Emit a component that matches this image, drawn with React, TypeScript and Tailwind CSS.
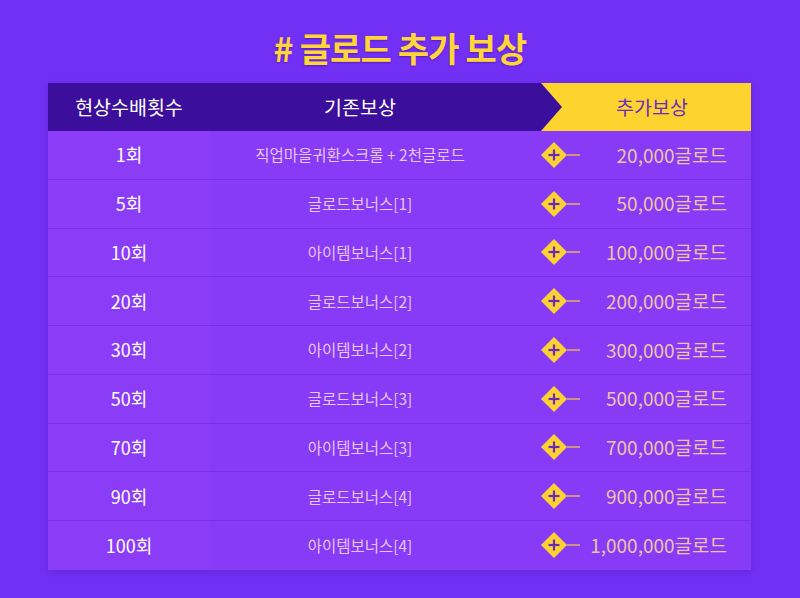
const rows: [string, string, string][] = [
  ["1회", "직업마을귀환스크롤 + 2천글로드", "20,000글로드"],
  ["5회", "글로드보너스[1]", "50,000글로드"],
  ["10회", "아이템보너스[1]", "100,000글로드"],
  ["20회", "글로드보너스[2]", "200,000글로드"],
  ["30회", "아이템보너스[2]", "300,000글로드"],
  ["50회", "글로드보너스[3]", "500,000글로드"],
  ["70회", "아이템보너스[3]", "700,000글로드"],
  ["90회", "글로드보너스[4]", "900,000글로드"],
  ["100회", "아이템보너스[4]", "1,000,000글로드"],
];

const PlusDiamond = () => (
  <svg width="40" height="28" viewBox="0 0 40 28" className="shrink-0">
    <polygon points="13,1 26,14 13,27 0,14" fill="#fcd232" />
    <line x1="26" y1="14" x2="39" y2="14" stroke="#fcd232" strokeWidth="1.2" />
    <line x1="7.5" y1="14" x2="18.5" y2="14" stroke="#6a2bb8" strokeWidth="2.2" />
    <line x1="13" y1="8.5" x2="13" y2="19.5" stroke="#6a2bb8" strokeWidth="2.2" />
  </svg>
);

export default function App() {
  return (
    <main
      className="w-[800px] h-[598px] bg-[#7230f4] flex flex-col items-center pt-[29px]"
      style={{ fontFamily: '"Noto Sans CJK KR", "Noto Sans", sans-serif' }}
    >
      <h1 className="text-[34px] leading-[37px] font-bold text-[#ffd53a] tracking-tight [text-shadow:0_1px_2px_rgba(60,10,140,0.5)]">
        # 글로드 추가 보상
      </h1>

      <div className="mt-[17px] w-[703px] ml-[-1px] shadow-[0_2px_8px_rgba(60,10,150,0.25)]">
        <div className="flex h-[48px] bg-[#3b0f9b] items-center">
          <div className="w-[162px] text-center text-white text-[19.5px]">현상수배횟수</div>
          <div className="w-[300px] text-center text-white text-[19.5px]">기존보상</div>
          <div className="ml-auto w-[210px] h-full bg-[#fdd42e] flex items-center justify-center pl-[12px] text-[19.5px] text-[#6b2bc2] [clip-path:polygon(0_0,100%_0,100%_100%,0_100%,21px_50%)]">
            추가보상
          </div>
        </div>

        {rows.map(([count, base, extra], i) => (
          <div
            key={count}
            className={`flex h-[48.75px] items-center ${i < rows.length - 1 ? "border-b border-[#7a2fe4]" : ""}`}
          >
            <div className="w-[162px] h-full flex items-center justify-center bg-[#8b3cf6] text-white text-[18px]">
              {count}
            </div>
            <div className="w-[300px] h-full flex items-center justify-center bg-[#873bf6] text-[#e6c4f4] text-[15.5px]">
              {base}
            </div>
            <div className="flex-1 h-full flex items-center bg-[#873bf6] pl-[31px] pr-[24px]">
              <PlusDiamond />
              <span className="ml-auto text-[19px] text-[#eec3a4]">{extra}</span>
            </div>
          </div>
        ))}
      </div>
    </main>
  );
}
